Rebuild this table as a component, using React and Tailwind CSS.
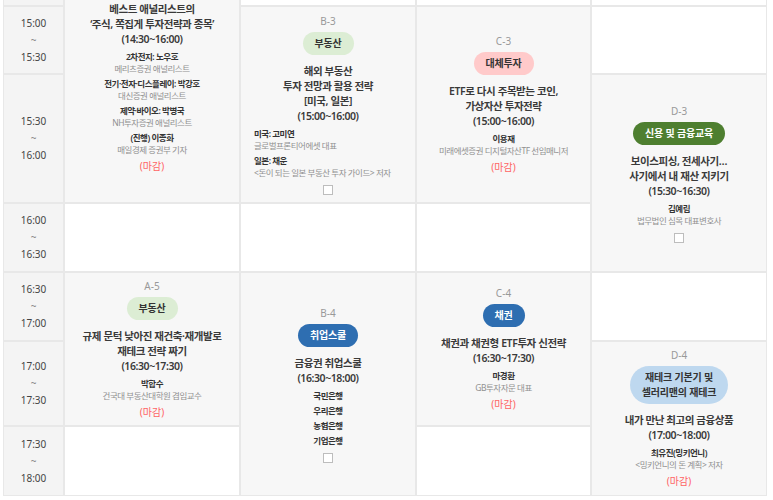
import React from 'react';

const badgeTones = {
    realEstate: 'bg-[#dcedd4] text-[#333]',
    alt: 'bg-[#ffcaca] text-[#333]',
    credit: 'bg-[#4e7f30] text-white',
    blue: 'bg-[#2e6eb1] text-white',
    lightBlue: 'bg-[#bed8ef] text-[#333]',
};

// first row sits above the fold, so its time label is left out
const times = [
    { from: '', to: '', row: 'row-start-1' },
    { from: '15:00', to: '15:30', row: 'row-start-2' },
    { from: '15:30', to: '16:00', row: 'row-start-3' },
    { from: '16:00', to: '16:30', row: 'row-start-4' },
    { from: '16:30', to: '17:00', row: 'row-start-5' },
    { from: '17:00', to: '17:30', row: 'row-start-6' },
    { from: '17:30', to: '18:00', row: 'row-start-7' },
];

// empty white cells in the timetable
const blanks = [
    'col-start-2 row-start-4',
    'col-start-2 row-start-7',
    'col-start-3 row-start-1',
    'col-start-3 row-start-4',
    'col-start-4 row-start-1',
    'col-start-4 row-start-4',
    'col-start-4 row-start-7',
    'col-start-5 row-start-1',
    'col-start-5 row-start-2',
    'col-start-5 row-start-5',
];

const sessions = [
    {
        id: 'A-4',
        pos: 'col-start-2 row-start-1 row-span-3 justify-end pb-[28px]',
        title: ['베스트 애널리스트의', '‘주식, 쪽집게 투자전략과 종목’', '(14:30~16:00)'],
        speakers: [
            { name: '2차전지: 노우호', affil: '메리츠증권 애널리스트' },
            { name: '전기·전자·디스플레이: 박강호', affil: '대신증권 애널리스트' },
            { name: '제약·바이오: 박병국', affil: 'NH투자증권 애널리스트' },
            { name: '(진행) 이종화', affil: '매일경제 증권부 기자' },
        ],
        closed: true,
    },
    {
        id: 'B-3',
        pos: 'col-start-3 row-start-2 row-span-2 justify-center',
        code: 'B-3',
        badge: { tone: 'realEstate', lines: ['부동산'] },
        title: ['해외 부동산', '투자 전망과 활용 전략', '[미국, 일본]', '(15:00~16:00)'],
        speakers: [
            { name: '미국: 고미연', affil: '글로벌프론티어에셋 대표' },
            { name: '일본: 채운', affil: '<돈이 되는 일본 부동산 투자 가이드> 저자' },
        ],
        left: true,
        checkbox: true,
    },
    {
        id: 'C-3',
        pos: 'col-start-4 row-start-2 row-span-2 justify-center',
        code: 'C-3',
        badge: { tone: 'alt', lines: ['대체투자'] },
        title: ['ETF로 다시 주목받는 코인,', '가상자산 투자전략', '(15:00~16:00)'],
        speakers: [{ name: '이용재', affil: '미래에셋증권 디지털자산TF 선임매니저' }],
        closed: true,
    },
    {
        id: 'D-3',
        pos: 'col-start-5 row-start-3 row-span-2 justify-center',
        code: 'D-3',
        badge: { tone: 'credit', lines: ['신용 및 금융교육'] },
        title: ['보이스피싱, 전세사기…', '사기에서 내 재산 지키기', '(15:30~16:30)'],
        speakers: [{ name: '김예림', affil: '법무법인 심목 대표변호사' }],
        checkbox: true,
    },
    {
        id: 'A-5',
        pos: 'col-start-2 row-start-5 row-span-2 justify-center',
        code: 'A-5',
        badge: { tone: 'realEstate', lines: ['부동산'] },
        title: ['규제 문턱 낮아진 재건축·재개발로', '재테크 전략 짜기', '(16:30~17:30)'],
        speakers: [{ name: '박합수', affil: '건국대 부동산대학원 겸임교수' }],
        closed: true,
    },
    {
        id: 'B-4',
        pos: 'col-start-3 row-start-5 row-span-3 justify-center',
        code: 'B-4',
        badge: { tone: 'blue', lines: ['취업스쿨'] },
        title: ['금융권 취업스쿨', '(16:30~18:00)'],
        speakers: [{ name: '국민은행' }, { name: '우리은행' }, { name: '농협은행' }, { name: '기업은행' }],
        checkbox: true,
    },
    {
        id: 'C-4',
        pos: 'col-start-4 row-start-5 row-span-2 justify-center',
        code: 'C-4',
        badge: { tone: 'blue', lines: ['채권'] },
        title: ['채권과 채권형 ETF투자 신전략', '(16:30~17:30)'],
        speakers: [{ name: '마경환', affil: 'GB투자자문 대표' }],
        closed: true,
    },
    {
        id: 'D-4',
        pos: 'col-start-5 row-start-6 row-span-2 justify-center',
        code: 'D-4',
        badge: { tone: 'lightBlue', lines: ['재테크 기본기 및', '셀러리맨의 재테크'] },
        title: ['내가 만난 최고의 금융상품', '(17:00~18:00)'],
        speakers: [{ name: '최유진(밍키언니)', affil: '<밍키언니의 돈 계획> 저자' }],
        closed: true,
    },
];

const Session = ({ pos, code, badge, title, speakers, left, closed, checkbox }) => (
    <div className={`bg-[#f7f7f7] flex flex-col items-center text-center px-[13px] overflow-hidden ${pos}`}>
        {code && <div className="text-[10px] leading-[14px] text-[#999]">{code}</div>}
        {badge && (
            <div className={`mt-[4px] mb-[9px] rounded-full px-[12px] py-[4px] text-[10px] leading-[15px] font-semibold tracking-[-0.02em] whitespace-nowrap ${badgeTones[badge.tone]}`}>
                {badge.lines.map((l) => <div key={l}>{l}</div>)}
            </div>
        )}
        <div className="text-[10.5px] leading-[15px] font-semibold text-[#3a3a3a] tracking-[-0.04em] whitespace-nowrap">
            {title.map((l) => <div key={l}>{l}</div>)}
        </div>
        <div className={`mt-[4px] flex flex-col gap-[3px] ${left ? 'self-stretch text-left' : ''}`}>
            {speakers.map((s) => (
                <div key={s.name} className="leading-[12px] tracking-[-0.03em] whitespace-nowrap">
                    <div className="text-[8.5px] font-semibold text-[#333]">{s.name}</div>
                    {s.affil && <div className="text-[8.5px] text-[#909090]">{s.affil}</div>}
                </div>
            ))}
        </div>
        {closed && <div className="mt-[3px] text-[10px] leading-[15px] text-[#ff6464]">(마감)</div>}
        {checkbox && <div className="mt-[6px] w-[10px] h-[10px] border border-[#bdbdbd] bg-white"></div>}
    </div>
);

const App = () => {
    return (
        <div className="h-[500px] overflow-hidden bg-white font-['Noto_Sans','Noto_Sans_CJK_KR',sans-serif]">
            <div className="-mt-[63px] ml-[3px] w-[764px] p-px bg-[#e8e8e8] grid gap-[2px] grid-cols-[59px_174px_174px_173px_174px] grid-rows-[67px_66px_127px_67px_67px_83px_68px]">
                {/* Time column */}
                {times.map((t) => (
                    <div key={t.row} className={`col-start-1 ${t.row} bg-[#f4f4f4] flex flex-col items-center justify-center text-[10px] leading-[17px] text-[#444]`}>
                        {t.from && (
                            <>
                                <span>{t.from}</span>
                                <span className="text-[#888]">~</span>
                                <span>{t.to}</span>
                            </>
                        )}
                    </div>
                ))}

                {blanks.map((b) => (
                    <div key={b} className={`bg-white ${b}`}></div>
                ))}

                {sessions.map((s) => (
                    <Session key={s.id} {...s} />
                ))}
            </div>
        </div>
    );
};

export default App;
